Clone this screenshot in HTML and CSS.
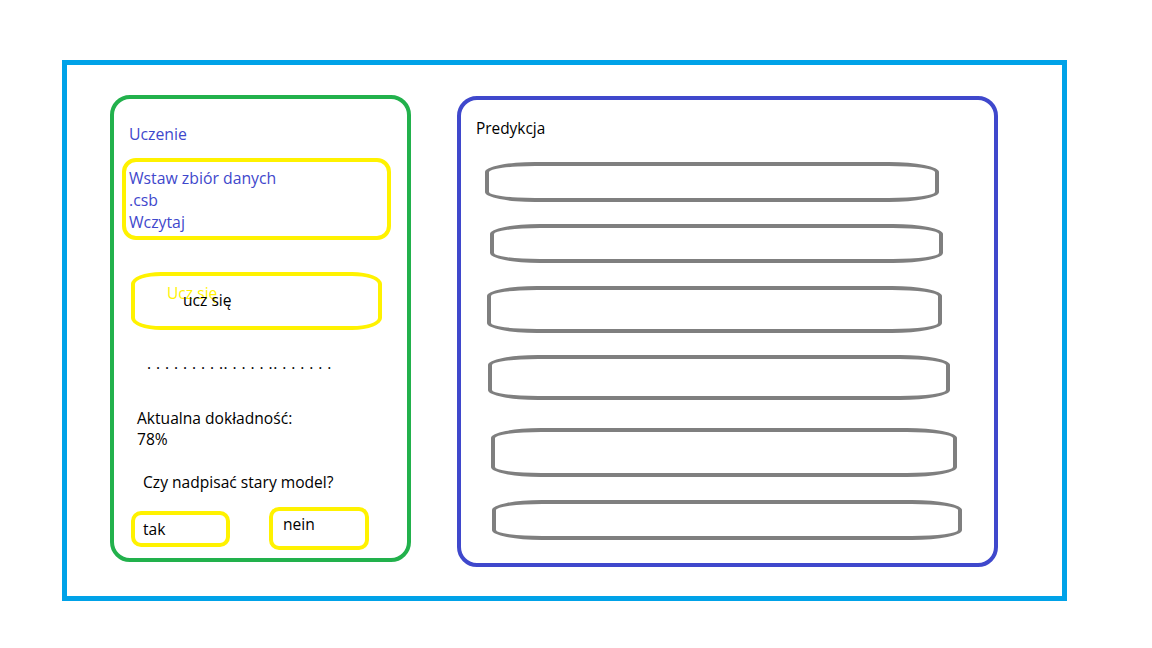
FILE: index.html
```html
<!DOCTYPE html>
<html lang="pl">
<head>
<meta charset="utf-8">
<title>Uczenie / Predykcja</title>
<link rel="stylesheet" href="styles.css">
</head>
<body>
<div class="frame">
  <section class="learn">
    <div class="title blue">Uczenie</div>
    <div class="dataset blue">
      <div>Wstaw zbiór danych</div>
      <div>.csb</div>
      <div>Wczytaj</div>
    </div>
    <div class="train">
      <span class="ghost">Ucz się</span>
      <span class="train-label">ucz się</span>
    </div>
    <div class="dots">. . . . . . . . .. . . . . .. . . . . . .</div>
    <div class="accuracy">
      <div>Aktualna dokładność:</div>
      <div>78%</div>
    </div>
    <div class="question">Czy nadpisać stary model?</div>
    <div class="answers">
      <div class="btn tak">tak</div>
      <div class="btn nein">nein</div>
    </div>
  </section>
  <section class="predict">
    <div class="ptitle">Predykcja</div>
    <div class="pill p1"></div>
    <div class="pill p2"></div>
    <div class="pill p3"></div>
    <div class="pill p4"></div>
    <div class="pill p5"></div>
    <div class="pill p6"></div>
  </section>
</div>
</body>
</html>
```
FILE: styles.css
```css
* { box-sizing: border-box; }
html, body { margin: 0; padding: 0; background: #ffffff; }
body {
  font-family: "Open Sans", "Noto Sans", sans-serif;
  font-size: 15.6px;
  color: #000000;
}
.frame {
  margin: 60px 0 0 62px;
  width: 1005px;
  height: 541px;
  border: 5px solid #00a2e8;
  display: flex;
  align-items: flex-start;
  padding: 30px 0 0 43px;
  gap: 46px;
}
.blue { color: #3f48cc; }

/* left panel */
.learn {
  width: 301px;
  height: 467px;
  border: 4px solid #22b14c;
  border-radius: 20px;
  display: flex;
  flex-direction: column;
  align-items: flex-start;
}
.title {
  margin: 25px 0 0 15px;
  line-height: 20px;
  font-size: 15.8px;
}
.dataset {
  margin: 14px 0 0 8px;
  width: 269px;
  height: 82px;
  border: 4px solid #fff200;
  border-radius: 14px;
  padding: 5px 0 0 3px;
  line-height: 22px;
  font-size: 15.8px;
}
.train {
  position: relative;
  margin: 32px 0 0 17px;
  width: 251px;
  height: 58px;
  border: 4px solid #fff200;
  border-radius: 30px / 12px;
}
.ghost {
  position: absolute;
  left: 32px;
  top: 7px;
  line-height: 20px;
  color: #fff200;
}
.train-label {
  position: absolute;
  left: 48px;
  top: 14px;
  line-height: 20px;
}
.dots {
  margin: 23px 0 0 33px;
  line-height: 20px;
  letter-spacing: 0.43px;
  white-space: nowrap;
}
.accuracy {
  margin: 35px 0 0 23px;
  line-height: 21px;
}
.question {
  margin: 22px 0 0 29px;
  line-height: 20px;
}
.answers {
  display: flex;
  align-items: flex-start;
  margin: 15px 0 0 17px;
}
.btn {
  border: 4px solid #fff200;
  border-radius: 10px;
  line-height: 20px;
}
.tak {
  margin-top: 4px;
  width: 99px;
  height: 36px;
  padding: 4px 0 0 8px;
}
.nein {
  margin-left: 39px;
  width: 100px;
  height: 43px;
  padding: 3px 0 0 10px;
}

/* right panel */
.predict {
  margin-top: 1px;
  width: 541px;
  height: 471px;
  border: 4px solid #3f48cc;
  border-radius: 20px;
  display: flex;
  flex-direction: column;
  align-items: flex-start;
}
.ptitle {
  margin: 19px 0 0 15px;
  line-height: 20px;
  font-size: 15.4px;
}
.pill {
  border: 4px solid #7f7f7f;
  border-radius: 50px / 10px;
}
.p1 { margin: 23px 0 0 24px; width: 454px; height: 40px; }
.p2 { margin: 22px 0 0 29px; width: 453px; height: 39px; }
.p3 { margin: 23px 0 0 26px; width: 455px; height: 47px; }
.p4 { margin: 22px 0 0 27px; width: 462px; height: 45px; }
.p5 { margin: 28px 0 0 30px; width: 466px; height: 49px; }
.p6 { margin: 23px 0 0 31px; width: 470px; height: 40px; }
```
